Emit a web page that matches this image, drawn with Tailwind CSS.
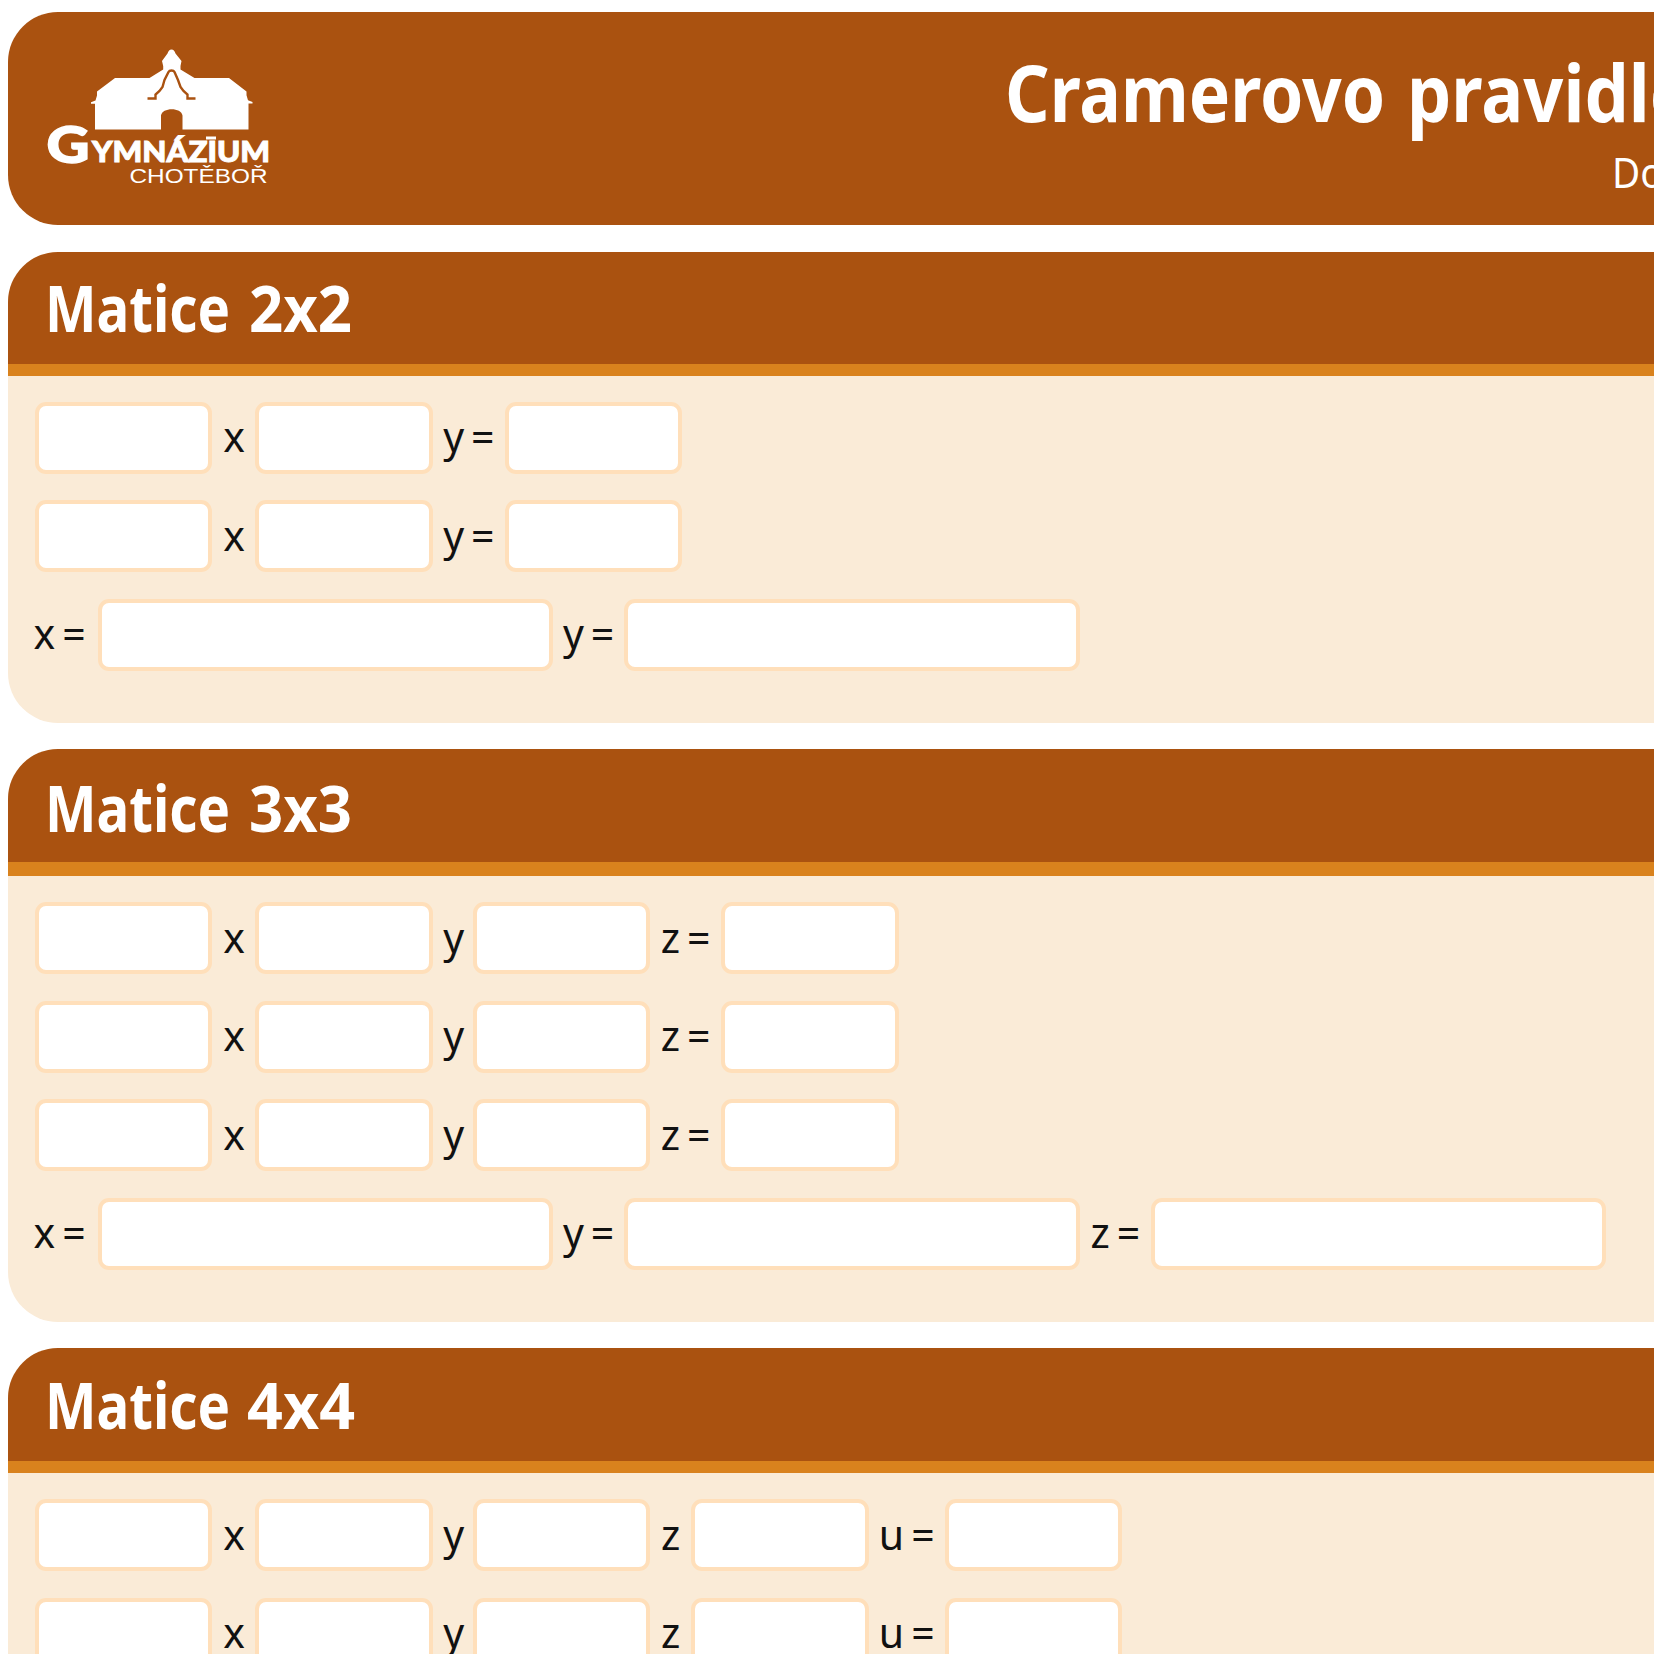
<!DOCTYPE html>
<html lang="cs">
<head>
<meta charset="utf-8">
<title>Cramerovo pravidlo</title>
<script src="https://cdn.jsdelivr.net/npm/@tailwindcss/browser@4"></script>
</head>
<body class="bg-white h-[1654px] w-[1654px] overflow-hidden font-['Noto_Sans',sans-serif] text-[#111]">
<div class="flex flex-col gap-[26px] pl-2 pt-3">
  <header class="mb-[0.500px] flex h-[213px] shrink-0 overflow-hidden rounded-l-[50px] bg-[#aa5210] text-white">
    <svg class="h-[213px] w-[300px] shrink-0" viewBox="8 12 300 213" fill="#fff">
      <path d="M171.5 49.5c-2 0-3 1.500-4 4l-5.500 7.500 1.200 5v3.500L149.500 78h-34.500L97 91.500v4l-1.500 5-4.500 1.700v1.500h4V129.500h66v-14c1-8.500 20.500-8.500 21.500 0V129.500h66v-26h4v-1.500l-4.500-1.700-1.500-5v-3.800L229 78h-34.500l-14-8.500v-3.500L181.500 61l-6-7.500c-1-2.500-2-4-4-4z"/>
      <path fill="none" stroke="#aa5210" stroke-width="2.400" d="M147.500 98.500h8v-4l4-3.500 3-4 2-7 4-8c1-2 5-2 6 0l3.500 8 2.500 7 3 4 4 3.500v4h8"/>
      <g font-family="Lato, Noto Sans" font-weight="900" stroke="#fff" stroke-linejoin="miter">
        <text x="46.500" y="162.500" font-size="51" stroke-width="1.400" textLength="43" lengthAdjust="spacingAndGlyphs">G</text>
        <text x="92" y="161.500" font-size="28.500" stroke-width="1" textLength="178" lengthAdjust="spacingAndGlyphs">YMNÁZIUM</text>
      </g>
      <rect x="206" y="136.500" width="10" height="3"/>
      <text x="129.500" y="183" font-family="Liberation Sans" font-size="20.500" textLength="138" lengthAdjust="spacingAndGlyphs">CHOTĚBOŘ</text>
    </svg>
    <div class="ml-[697px] flex w-[649px] shrink-0 flex-col whitespace-nowrap">
      <h1 class="mt-[29.500px] flex text-[78.500px]/[100px] font-bold">
        <span class="w-[402px] shrink-0 origin-left scale-x-[0.886]">Cramerovo</span>
        <span class="shrink-0 origin-left scale-x-[0.894]">pravidlo</span>
      </h1>
      <p class="pl-[606.500px] text-[42px]/[60px]"><span class="inline-block origin-left scale-x-[0.92]">Do</span></p>
    </div>
  </header>

  <section class="h-[471.500px] shrink-0 overflow-hidden rounded-l-[50px] bg-[#faebd7]">
    <div class="h-[124.500px] border-b-12 border-[#d9821d] bg-[#aa5210] pl-[37px] pt-[10px] text-white">
      <h2 class="flex text-[65px]/[90px] font-bold">
        <span class="w-[203.500px] origin-left scale-x-[0.841]">Matice</span>
        <span class="origin-left scale-x-[0.92]">2x2</span>
      </h2>
    </div>
    <div class="flex flex-col gap-[26.700px] pl-[26.500px] pt-[25.600px]" data-rows="xy" data-count="2"></div>
  </section>

  <section class="h-[573px] shrink-0 overflow-hidden rounded-l-[50px] bg-[#faebd7]">
    <div class="h-[127px] border-b-14 border-[#d9821d] bg-[#aa5210] pl-[37px] pt-[13px] text-white">
      <h2 class="flex text-[65px]/[90px] font-bold">
        <span class="w-[203.500px] origin-left scale-x-[0.841]">Matice</span>
        <span class="origin-left scale-x-[0.92]">3x3</span>
      </h2>
    </div>
    <div class="flex flex-col gap-[26.600px] pl-[26.500px] pt-[26px]" data-rows="xyz" data-count="3"></div>
  </section>

  <section class="h-[306px] shrink-0 overflow-hidden rounded-tl-[50px] bg-[#faebd7]">
    <div class="h-[125px] border-b-12 border-[#d9821d] bg-[#aa5210] pl-[37px] pt-[11px] text-white">
      <h2 class="flex text-[65px]/[90px] font-bold">
        <span class="w-[201.500px] origin-left scale-x-[0.841]">Matice</span>
        <span class="origin-left scale-x-[0.965]">4x4</span>
      </h2>
    </div>
    <div class="flex flex-col gap-[26.600px] pl-[26.500px] pt-[26px]" data-rows="xyzu" data-count="2"></div>
  </section>
</div>
<script>
const field = size => `<input class="${size} h-[72px] shrink-0 rounded-[11px] border-4 border-[#ffdfba] bg-white">`;
const label = (name, size, eq) => `<span class="${size} flex h-[60px] shrink-0 items-center justify-center gap-[7px] pb-[3px] text-[41px]/[60px]"><span>${name}</span>${eq ? '<span>=</span>' : ''}</span>`;
const single = { x: 'w-[43.500px] pl-px', y: 'w-[40px] pl-[2px]', z: 'w-[41.500px]' };
const equals = { y: 'w-[72.500px]', z: 'w-[71.500px]', u: 'w-[76px]' };
// Each matrix: rows of coefficients, then (below the full ones) a row of results.
document.querySelectorAll('[data-rows]').forEach(box => {
  const names = [...box.dataset.rows];
  let html = '';
  for (let r = 0; r < +box.dataset.count; r++) {
    html += '<div class="flex items-center">' + names.map((n, i) => {
      const last = i === names.length - 1;
      return field('w-[177.300px]') + label(n, last ? equals[n] : single[n], last);
    }).join('') + field('w-[177.300px]') + '</div>';
  }
  if (names.length < 4) {
    html += '<div class="flex items-center">' + names.map((n, i) =>
      label(n, i ? 'w-[71.500px]' : 'w-[63.200px] -ml-[6.500px] mr-[6.500px]', true) + field('w-[455.200px]')).join('') + '</div>';
  }
  box.innerHTML = html;
});
</script>
</body>
</html>
